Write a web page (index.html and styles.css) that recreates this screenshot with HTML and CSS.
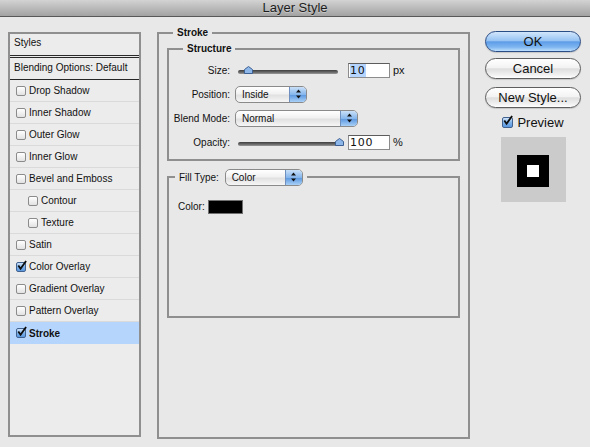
FILE: index.html
```html
<!DOCTYPE html>
<html lang="en">
<head>
    <meta charset="UTF-8">
    <meta name="viewport" content="width=device-width, initial-scale=1.0">
    <title>Layer Style</title>
    <link rel="stylesheet" href="styles.css">
</head>
<body>
    <div class="titlebar">Layer Style</div>

    <div class="content">
        <!-- Effect list -->
        <div class="style-list">
            <div class="list-head">Styles</div>
            <div class="list-blend">Blending Options: Default</div>
            <div class="list-item"><span class="check"></span>Drop Shadow</div>
            <div class="list-item"><span class="check"></span>Inner Shadow</div>
            <div class="list-item"><span class="check"></span>Outer Glow</div>
            <div class="list-item"><span class="check"></span>Inner Glow</div>
            <div class="list-item"><span class="check"></span>Bevel and Emboss</div>
            <div class="list-item sub"><span class="check"></span>Contour</div>
            <div class="list-item sub"><span class="check"></span>Texture</div>
            <div class="list-item"><span class="check"></span>Satin</div>
            <div class="list-item">
                <span class="check on"><svg viewBox="0 0 12 12"><path d="M2.5 5.5 L5 9 L11 0.5" /></svg></span>Color Overlay
            </div>
            <div class="list-item"><span class="check"></span>Gradient Overlay</div>
            <div class="list-item"><span class="check"></span>Pattern Overlay</div>
            <div class="list-item selected">
                <span class="check on"><svg viewBox="0 0 12 12"><path d="M2.5 5.5 L5 9 L11 0.5" /></svg></span>Stroke
            </div>
        </div>

        <!-- Stroke settings -->
        <fieldset class="group outer">
            <legend>Stroke</legend>

            <fieldset class="group structure">
                <legend>Structure</legend>
                <div class="form-grid">
                    <span class="label">Size:</span>
                    <div class="control">
                        <div class="slider">
                            <div class="track"></div>
                            <svg class="thumb" style="left: 6px" viewBox="0 0 9 8"><path d="M0.5 7.5 V3.5 L4.5 0.5 L8.5 3.5 V7.5 Z" /></svg>
                        </div>
                        <span class="field"><span class="sel">10</span></span>
                        <span class="unit">px</span>
                    </div>

                    <span class="label">Position:</span>
                    <div class="control">
                        <div class="popup pos">
                            <span class="popup-text">Inside</span>
                            <span class="popup-arrows"><svg viewBox="0 0 7 10"><path d="M3.5 0.5 L6 3.5 H1 Z M3.5 9.5 L6 6.5 H1 Z" /></svg></span>
                        </div>
                    </div>

                    <span class="label">Blend Mode:</span>
                    <div class="control">
                        <div class="popup blend">
                            <span class="popup-text">Normal</span>
                            <span class="popup-arrows"><svg viewBox="0 0 7 10"><path d="M3.5 0.5 L6 3.5 H1 Z M3.5 9.5 L6 6.5 H1 Z" /></svg></span>
                        </div>
                    </div>

                    <span class="label">Opacity:</span>
                    <div class="control">
                        <div class="slider">
                            <div class="track"></div>
                            <svg class="thumb" style="left: 97px" viewBox="0 0 9 8"><path d="M0.5 7.5 V3.5 L4.5 0.5 L8.5 3.5 V7.5 Z" /></svg>
                        </div>
                        <span class="field">100</span>
                        <span class="unit">%</span>
                    </div>
                </div>
            </fieldset>

            <fieldset class="group fill">
                <legend class="legend-popup">
                    <span class="legend-label">Fill Type:</span>
                    <span class="popup filltype">
                        <span class="popup-text">Color</span>
                        <span class="popup-arrows"><svg viewBox="0 0 7 10"><path d="M3.5 0.5 L6 3.5 H1 Z M3.5 9.5 L6 6.5 H1 Z" /></svg></span>
                    </span>
                </legend>
                <div class="color-row">
                    <span>Color:</span>
                    <span class="swatch"></span>
                </div>
            </fieldset>
        </fieldset>

        <!-- Dialog buttons and preview -->
        <div class="actions">
            <button class="btn primary">OK</button>
            <button class="btn cancel">Cancel</button>
            <button class="btn new-style">New Style...</button>
            <div class="preview-toggle">
                <span class="check big on"><svg viewBox="0 0 12 12"><path d="M2.5 5.5 L5 9 L11 0.5" /></svg></span>
                Preview
            </div>
            <div class="preview">
                <div class="preview-shape"><div class="preview-hole"></div></div>
            </div>
        </div>
    </div>
</body>
</html>
```

FILE: styles.css
```css
* {
    margin: 0;
    padding: 0;
    box-sizing: border-box;
}

body {
    width: 590px;
    height: 447px;
    overflow: hidden;
    background: #e8e8e8;
    font-family: 'Liberation Sans', Arial, sans-serif;
    font-size: 10px;
    color: #111;
}

.titlebar {
    height: 17px;
    line-height: 16px;
    text-align: center;
    font-size: 13px;
    color: #1c1c1c;
    background: linear-gradient(#d3d3d3, #a2a2a2);
    border-bottom: 1px solid #585858;
    text-shadow: 0 1px 0 rgba(255, 255, 255, 0.35);
}

.content {
    display: flex;
    align-items: flex-start;
    padding: 9px 0 0 8px;
}

/* Left list */
.style-list {
    width: 133px;
    height: 405px;
    margin-top: 6px;
    background: #ececec;
    border: 2px solid #8f8f8f;
}

.list-head,
.list-blend {
    display: flex;
    align-items: center;
    padding-left: 4px;
}

.list-head {
    height: 24px;
    padding-bottom: 4px;
    border-bottom: 3px double #2a2a2a;
}

.list-blend {
    height: 22px;
    padding-bottom: 2px;
    border-bottom: 1px solid #262626;
}

.list-item {
    height: 22px;
    display: flex;
    align-items: center;
    border-bottom: 1px solid #dadada;
}

.list-item.selected {
    background: #b6d5fd;
    font-weight: bold;
}

.list-item:last-child {
    border-bottom: none;
}

.check {
    position: relative;
    width: 10px;
    height: 10px;
    margin: 0 3px 0 6px;
    border: 1px solid #8b8b8b;
    border-radius: 2px;
    background: linear-gradient(#ffffff, #e2e2e2);
    flex-shrink: 0;
}

.list-item.sub .check {
    margin-left: 18px;
}

.check.on {
    border-color: #41618f;
    background: linear-gradient(#cfe3f8, #79aee9 55%, #5b98df);
}

/* Check mark sticks out over the box edge */
.check svg {
    position: absolute;
    left: -1px;
    top: -3px;
    width: 11px;
    height: 12px;
    overflow: visible;
}

.check svg path {
    fill: none;
    stroke: #0d0d0d;
    stroke-width: 2;
}

/* Fieldsets */
.group {
    border: 2px solid #8f8f8f;
    min-width: 0;
}

.group legend {
    margin-left: 14px;
    padding: 0 4px;
    font-weight: bold;
    line-height: 14px;
}

.outer {
    width: 313px;
    height: 413px;
    margin-left: 16px;
    padding: 0 8px;
}

.outer > legend {
    margin-left: 6px;
}

.structure {
    margin-top: 2px;
    padding: 2px 0 5px;
}

.form-grid {
    display: grid;
    grid-template-columns: 61px auto;
    grid-auto-rows: 24px;
    column-gap: 5px;
    align-items: center;
}

.label {
    text-align: right;
}

.control {
    display: flex;
    align-items: center;
}

.slider {
    position: relative;
    width: 100px;
    height: 12px;
    margin-left: 3px;
    margin-right: 10px;
}

.track {
    margin-top: 6px;
    height: 4px;
    border-radius: 2px;
    background: linear-gradient(#3e3e3e, #6d6d6d 60%, #9a9a9a);
}

.thumb {
    position: absolute;
    top: 2px;
    width: 9px;
    height: 8px;
}

.thumb path {
    fill: #8db7e8;
    stroke: #3d5f91;
    stroke-width: 1;
}

.field {
    width: 42px;
    height: 15px;
    padding-left: 1px;
    background: #fff;
    border: 1px solid #8c8c8c;
    border-top-color: #5c5c5c;
    font-family: 'DejaVu Sans', sans-serif;
    font-size: 11px;
    line-height: 13px;
    letter-spacing: 0.8px;
    color: #111;
}

.sel {
    background: #b5d5ff;
}

.unit {
    margin-left: 3px;
    font-size: 11px;
}

/* Popup menus */
.popup {
    display: inline-flex;
    height: 17px;
    border: 1px solid #8a8a8a;
    border-radius: 5px;
    background: linear-gradient(#ffffff, #f1f1f1 45%, #e1e1e1 55%, #f6f6f6);
    overflow: hidden;
    vertical-align: middle;
}

.popup-text {
    flex: 1;
    padding-left: 6px;
    line-height: 15px;
    font-weight: normal;
}

.popup-arrows {
    width: 17px;
    display: flex;
    align-items: center;
    justify-content: center;
    border-left: 1px solid #6f8fbe;
    background: linear-gradient(#c9e0f8, #86b6ec 50%, #5f9ae0 55%, #a9d0f7);
}

.popup-arrows svg {
    width: 7px;
    height: 10px;
}

.popup-arrows path {
    fill: #111;
}

.pos {
    width: 72px;
}

.blend {
    width: 123px;
}

.filltype {
    width: 78px;
    margin-left: 3px;
}

.fill {
    margin-top: 7px;
    height: 150px;
    padding: 0 0 0 9px;
}

.fill > legend {
    margin-left: -3px;
    padding: 0 4px;
    line-height: 17px;
    font-weight: normal;
}

.legend-label {
    vertical-align: middle;
}

.color-row {
    display: flex;
    align-items: center;
    gap: 3px;
    margin-top: 14px;
}

.swatch {
    width: 35px;
    height: 14px;
    background: #000;
    border: 1px solid #707070;
}

/* Right column */
.actions {
    width: 96px;
    margin: 5px 0 0 15px;
    display: flex;
    flex-direction: column;
    align-items: center;
}

.btn {
    width: 96px;
    height: 21px;
    border: 1px solid #5e5e5e;
    border-radius: 11px;
    background: linear-gradient(#ffffff, #f3f3f3 45%, #dedede 52%, #f2f2f2 85%, #ffffff);
    font-family: 'Liberation Sans', Arial, sans-serif;
    font-size: 13px;
    color: #111;
    box-shadow: 0 1px 1px rgba(0, 0, 0, 0.15);
}

.primary {
    border-color: #2b4d85;
    background: linear-gradient(#d2e6fb, #98c4f3 45%, #5d9de8 52%, #7fb6f0 80%, #bfe0fd);
}

.cancel {
    margin-top: 6px;
}

.new-style {
    margin-top: 8px;
}

.preview-toggle {
    display: flex;
    align-items: center;
    margin-top: 7px;
    height: 14px;
    font-size: 13px;
}

.check.big {
    width: 11px;
    height: 11px;
    margin: 0 4px 0 0;
}

.preview {
    width: 65px;
    height: 65px;
    margin-top: 8px;
    background: #cbcbcb;
    display: flex;
    align-items: center;
    justify-content: center;
    padding-top: 3px;
}

.preview-shape {
    width: 32px;
    height: 32px;
    background: #000;
    display: flex;
    align-items: center;
    justify-content: center;
}

.preview-hole {
    width: 12px;
    height: 12px;
    background: #fff;
}
```
